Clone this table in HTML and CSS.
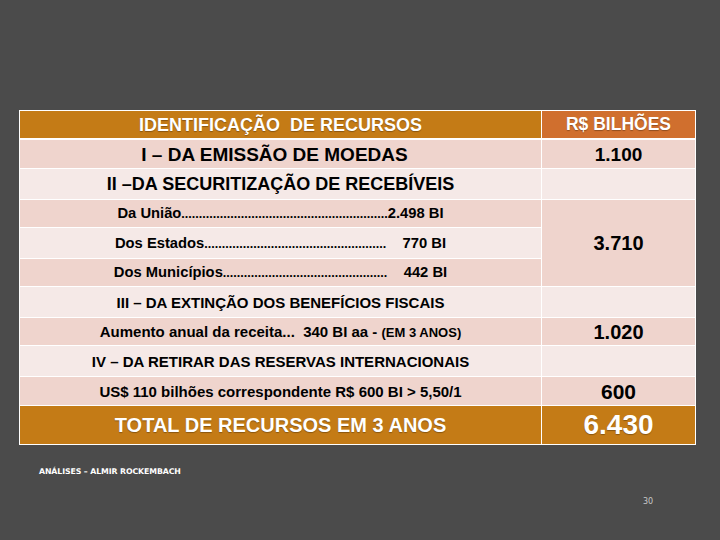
FILE: index.html
```html
<!DOCTYPE html>
<html lang="pt">
<head>
<meta charset="utf-8">
<link rel="stylesheet" href="styles.css">
</head>
<body>
<div class="slide">
  <table class="res">
    <tr class="h">
      <td class="l hl">IDENTIFICAÇÃO&nbsp; DE RECURSOS</td>
      <td class="r hr">R$ BILHÕES</td>
    </tr>
    <tr class="dk r1">
      <td class="l s19 shift">I – DA EMISSÃO DE MOEDAS</td>
      <td class="r s19">1.100</td>
    </tr>
    <tr class="lt r2">
      <td class="l s18">II –DA SECURITIZAÇÃO DE RECEBÍVEIS</td>
      <td class="r"></td>
    </tr>
    <tr class="dk r3">
      <td class="l sm">Da União<span class="dots">...........................................................</span>2.498 BI</td>
      <td class="r num dk" rowspan="3">3.710</td>
    </tr>
    <tr class="lt r4">
      <td class="l sm">Dos Estados<span class="dots">....................................................</span>&nbsp;&nbsp;&nbsp; 770 BI</td>
    </tr>
    <tr class="dk r5">
      <td class="l sm">Dos Municípios<span class="dots">...............................................</span>&nbsp;&nbsp;&nbsp; 442 BI</td>
    </tr>
    <tr class="lt r6">
      <td class="l md">III – DA EXTINÇÃO DOS BENEFÍCIOS FISCAIS</td>
      <td class="r"></td>
    </tr>
    <tr class="dk r7">
      <td class="l md">Aumento anual da receita...&nbsp; 340 BI aa - <span class="xs">(EM 3 ANOS)</span></td>
      <td class="r num">1.020</td>
    </tr>
    <tr class="lt r8">
      <td class="l md">IV – DA RETIRAR DAS RESERVAS INTERNACIONAIS</td>
      <td class="r"></td>
    </tr>
    <tr class="dk r9">
      <td class="l md">US$ 110 bilhões correspondente R$ 600 BI &gt; 5,50/1</td>
      <td class="r num n600">600</td>
    </tr>
    <tr class="tot">
      <td class="l totl">TOTAL DE RECURSOS EM 3 ANOS</td>
      <td class="r totr">6.430</td>
    </tr>
  </table>
  <div class="credit">ANÁLISES – ALMIR ROCKEMBACH</div>
  <div class="pagenum">30</div>
</div>
</body>
</html>
```

FILE: styles.css
```css
html, body {
  margin: 0;
  padding: 0;
  background: #4b4b4b;
}
.slide {
  width: 720px;
  height: 540px;
  background: #4b4b4b;
  padding-top: 110px;
  box-sizing: border-box;
  font-family: "Liberation Sans", Arial, sans-serif;
  font-weight: bold;
}
.res {
  margin-left: 19px;
  width: 677px;
  border-collapse: collapse;
  border: 1px solid #c9c3c1;
  table-layout: fixed;
}
.res td {
  border: 1px solid #ffffff;
  padding: 0;
  text-align: center;
  vertical-align: middle;
  color: #000;
  white-space: nowrap;
  overflow: hidden;
  line-height: 1;
}
.res td.l { width: 521px; }
.res td.r { width: 153px; }
.res td.shift { padding-right: 12px; }
.h td { height: 27px; border-bottom-width: 2px; }
.hl { background: #c47b16; color: #fff !important; font-size: 18px; text-shadow: 0 1px 1px rgba(0,0,0,0.3); }
.hr { background: #d06f2e; color: #fff !important; font-size: 17.5px; text-shadow: 0 1px 1px rgba(0,0,0,0.3); }
.dk td { background: #efd4cd; }
.lt td { background: #f5e9e7; }
.res td.num.dk { background: #efd4cd; }
.r1 td { height: 28px; }
.r2 td { height: 30px; }
.r3 td { height: 27px; }
.r4 td { height: 30px; }
.r5 td { height: 27px; }
.r6 td { height: 30px; }
.r7 td { height: 27px; }
.r8 td { height: 30px; }
.r9 td { height: 28px; }
.tot td { height: 38px; background: #c47b16; color: #fff; }
.s19 { font-size: 19px; }
.s18 { font-size: 18px; }
.md { font-size: 15px; }
.sm { font-size: 14.75px; }
.dots { font-size: 12.6px; }
.xs { font-size: 13px; }
.num { font-size: 20px; }
.n600 { font-size: 21px; }
.totl { font-size: 20px; text-shadow: 0 1px 1px rgba(0,0,0,0.3); }
.totr { font-size: 28px; text-shadow: 0 1px 1px rgba(0,0,0,0.3); }
.credit {
  margin: 22px 0 0 39px;
  color: #ffffff;
  font-family: "DejaVu Sans", sans-serif;
  font-size: 7.8px;
  font-weight: bold;
  letter-spacing: -0.1px;
}
.pagenum {
  margin: 21px 0 0 643px;
  color: #c8c8c8;
  font-family: "DejaVu Sans", sans-serif;
  font-size: 8px;
  font-weight: normal;
}
```
